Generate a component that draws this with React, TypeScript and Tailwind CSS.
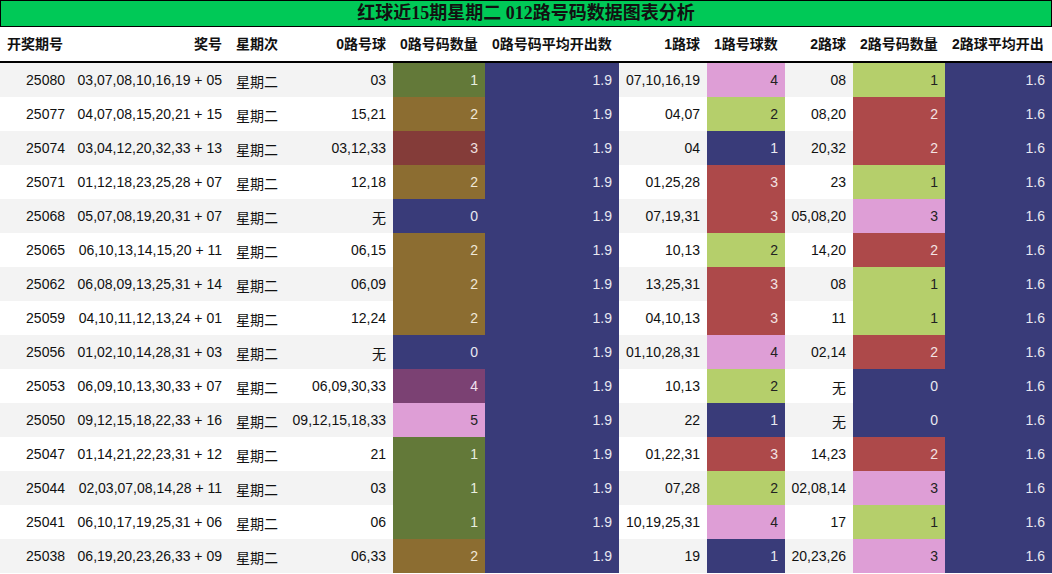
import React from "react";

const rows: [string, string, string, number, string, number, string, number][] = [
  ["25080", "03,07,08,10,16,19 + 05", "03", 1, "07,10,16,19", 4, "08", 1],
  ["25077", "04,07,08,15,20,21 + 15", "15,21", 2, "04,07", 2, "08,20", 2],
  ["25074", "03,04,12,20,32,33 + 13", "03,12,33", 3, "04", 1, "20,32", 2],
  ["25071", "01,12,18,23,25,28 + 07", "12,18", 2, "01,25,28", 3, "23", 1],
  ["25068", "05,07,08,19,20,31 + 07", "无", 0, "07,19,31", 3, "05,08,20", 3],
  ["25065", "06,10,13,14,15,20 + 11", "06,15", 2, "10,13", 2, "14,20", 2],
  ["25062", "06,08,09,13,25,31 + 14", "06,09", 2, "13,25,31", 3, "08", 1],
  ["25059", "04,10,11,12,13,24 + 01", "12,24", 2, "04,10,13", 3, "11", 1],
  ["25056", "01,02,10,14,28,31 + 03", "无", 0, "01,10,28,31", 4, "02,14", 2],
  ["25053", "06,09,10,13,30,33 + 07", "06,09,30,33", 4, "10,13", 2, "无", 0],
  ["25050", "09,12,15,18,22,33 + 16", "09,12,15,18,33", 5, "22", 1, "无", 0],
  ["25047", "01,14,21,22,23,31 + 12", "21", 1, "01,22,31", 3, "14,23", 2],
  ["25044", "02,03,07,08,14,28 + 11", "03", 1, "07,28", 2, "02,08,14", 3],
  ["25041", "06,10,17,19,25,31 + 06", "06", 1, "10,19,25,31", 4, "17", 1],
  ["25038", "06,19,20,23,26,33 + 09", "06,33", 2, "19", 1, "20,23,26", 3],
];

const c0: Record<number, string> = {
  0: "bg-[#393b79] text-[#e8e8f0]",
  1: "bg-[#637939] text-[#e8eee0]",
  2: "bg-[#8c6d31] text-[#f0e8d8]",
  3: "bg-[#843c39] text-[#f0e0e0]",
  4: "bg-[#7b4173] text-[#f0e0ee]",
  5: "bg-[#de9ed6] text-[#222]",
};
const c12: Record<number, string> = {
  0: "bg-[#393b79] text-[#e8e8f0]",
  1: "bg-[#b5cf6b] text-[#222]",
  2: "bg-[#ad494a] text-[#f4e4e4]",
  3: "bg-[#de9ed6] text-[#222]",
  4: "bg-[#de9ed6] text-[#222]",
};
const c1: Record<number, string> = {
  1: "bg-[#393b79] text-[#e8e8f0]",
  2: "bg-[#b5cf6b] text-[#222]",
  3: "bg-[#ad494a] text-[#f4e4e4]",
  4: "bg-[#de9ed6] text-[#222]",
};

const cols = "grid grid-cols-[72px_157px_58px_106px_92px_134px_88px_78px_68px_92px_107px]";
const cell = "px-[7px] flex items-center h-full";

export default function App() {
  return (
    <div className="w-[1052px] h-[574px] bg-white overflow-hidden text-[14px] text-[#111]" style={{ fontFamily: '"Liberation Sans","Noto Sans CJK SC",sans-serif' }}>
      <div className="h-[27px] bg-[#00c957] border border-black flex items-center justify-center text-[18px] font-bold" style={{ fontFamily: '"Liberation Serif","Noto Sans CJK SC",serif' }}>
        红球近15期星期二 012路号码数据图表分析
      </div>
      <div className={`${cols} h-[36px] border-b-2 border-black font-bold text-[14px]`}>
        <div className={`${cell}`}>开奖期号</div>
        <div className={`${cell} justify-end`}>奖号</div>
        <div className={`${cell}`}>星期次</div>
        <div className={`${cell} justify-end`}>0路号球</div>
        <div className={`${cell}`}>0路号码数量</div>
        <div className={`${cell}`}>0路号码平均开出数</div>
        <div className={`${cell} justify-end`}>1路球</div>
        <div className={`${cell}`}>1路号球数</div>
        <div className={`${cell} justify-end`}>2路球</div>
        <div className={`${cell}`}>2路号码数量</div>
        <div className={`${cell}`}>2路球平均开出</div>
      </div>
      {rows.map((r, i) => (
        <div key={r[0]} className={`${cols} h-[34px] ${i % 2 === 0 ? "bg-[#f3f3f3]" : "bg-white"}`}>
          <div className={`${cell} justify-end`}>{r[0]}</div>
          <div className={`${cell} justify-end whitespace-nowrap`}>{r[1]}</div>
          <div className={`${cell} pt-[4px]`}>星期二</div>
          <div className={`${cell} justify-end whitespace-nowrap ${r[2] === "无" ? "pt-[4px]" : ""}`}>{r[2]}</div>
          <div className={`${cell} justify-end ${c0[r[3]]}`}>{r[3]}</div>
          <div className={`${cell} justify-end bg-[#393b79] text-[#e8e8f0]`}>1.9</div>
          <div className={`${cell} justify-end whitespace-nowrap`}>{r[4]}</div>
          <div className={`${cell} justify-end ${c1[r[5]]}`}>{r[5]}</div>
          <div className={`${cell} justify-end whitespace-nowrap ${r[6] === "无" ? "pt-[4px]" : ""}`}>{r[6]}</div>
          <div className={`${cell} justify-end ${c12[r[7]]}`}>{r[7]}</div>
          <div className={`${cell} justify-end bg-[#393b79] text-[#e8e8f0]`}>1.6</div>
        </div>
      ))}
    </div>
  );
}
